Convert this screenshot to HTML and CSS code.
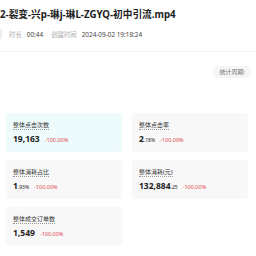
FILE: index.html
```html
<!DOCTYPE html>
<html lang="zh-CN">
<head>
  <meta charset="UTF-8">
  <title>素材详情</title>
  <link rel="stylesheet" href="styles.css">
</head>
<body>
  <div class="page">
    <div class="header">
      <h1 class="title">2-裂变-兴p-琳j-琳L-ZGYQ-初中引流.mp4</h1>
      <div class="meta">
        <span class="thumb"></span>
        <span class="meta-key">时长</span>
        <span class="meta-val">00:44</span>
        <span class="meta-key gap">创建时间</span>
        <span class="meta-val">2024-09-02 19:18:24</span>
      </div>
    </div>

    <div class="toolbar">
      <span class="period">统计周期:</span>
    </div>

    <div class="cards">
      <div class="card active">
        <div class="label"><span>整体点击次数</span></div>
        <div class="value">19,163<span class="trend">-100.00%</span></div>
      </div>
      <div class="card">
        <div class="label"><span>整体点击率</span></div>
        <div class="value">2<small>.18%</small><span class="trend">-100.00%</span></div>
      </div>
      <div class="card">
        <div class="label"><span>整体消耗占比</span></div>
        <div class="value">1<small>.93%</small><span class="trend">-100.00%</span></div>
      </div>
      <div class="card">
        <div class="label"><span>整体消耗(元)</span></div>
        <div class="value">132,884<small>.25</small><span class="trend">-100.00%</span></div>
      </div>
      <div class="card">
        <div class="label"><span>整体成交订单数</span></div>
        <div class="value">1,549<span class="trend">-100.00%</span></div>
      </div>
    </div>
  </div>
</body>
</html>
```

FILE: styles.css
```css
body {
  margin: 0;
  font-family: "Noto Sans", "Noto Sans CJK SC", sans-serif;
  color: #222;
  background: #fff;
  overflow: hidden;
}
.page {
  width: 256px;
}
.header {
  padding-top: 8px;
  padding-bottom: 12px;
  border-bottom: 1px solid #f2f2f2;
}
.title {
  margin: 0;
  font-size: 9.7px;
  font-weight: 700;
  line-height: 14px;
  white-space: nowrap;
}
.meta {
  display: flex;
  align-items: center;
  margin-top: 7px;
  height: 10px;
  font-size: 6.4px;
  white-space: nowrap;
}
.thumb {
  width: 2px;
  height: 10px;
  background: #eee;
  margin-right: 7px;
}
.meta-key {
  color: #aaa;
  margin-right: 5px;
}
.meta-key.gap {
  margin-left: 8px;
}
.meta-val {
  color: #444;
}
.toolbar {
  display: flex;
  justify-content: flex-end;
  padding: 14px 6px 0 0;
}
.period {
  background: #f5f5f5;
  color: #777;
  font-size: 6px;
  line-height: 12px;
  padding: 0 5px;
  border-radius: 2px;
}
.cards {
  display: grid;
  grid-template-columns: 116px 116px;
  gap: 8px 10px;
  padding: 35px 0 0 6px;
}
.card {
  height: 39px;
  box-sizing: border-box;
  padding: 8px 7px 0;
  background: #f8f8f8;
  border-radius: 3px;
}
.card.active {
  background: #eefbfc;
}
.label {
  display: flex;
  font-size: 6px;
  line-height: 8px;
  color: #333;
}
.label span {
  border-bottom: 1px dotted #999;
}
.value {
  margin-top: 3px;
  font-size: 8.5px;
  font-weight: 700;
  line-height: 11px;
  color: #222;
}
.value small {
  font-size: 5px;
  font-weight: 400;
}
.trend {
  margin-left: 5px;
  font-size: 5.5px;
  font-weight: 400;
  color: #e0454a;
}
```
